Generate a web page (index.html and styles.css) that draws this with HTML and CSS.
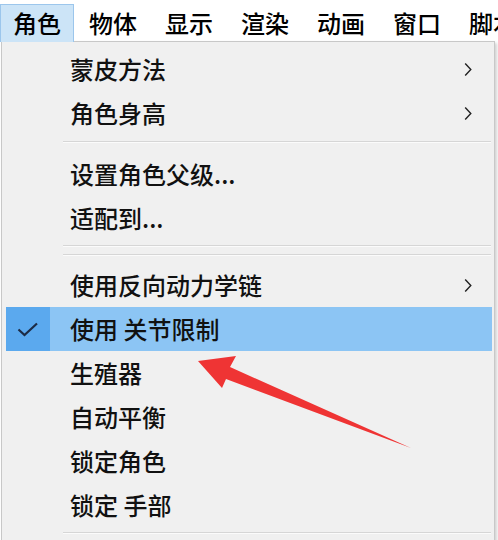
FILE: index.html
```html
<!DOCTYPE html>
<html lang="zh-CN">
<head>
<meta charset="utf-8">
<title>角色菜单</title>
<link rel="stylesheet" href="styles.css">
</head>
<body>
<div class="page">
  <nav class="menubar">
    <span class="top-item active">角色</span>
    <span class="top-item">物体</span>
    <span class="top-item">显示</span>
    <span class="top-item">渲染</span>
    <span class="top-item">动画</span>
    <span class="top-item">窗口</span>
    <span class="top-item">脚本</span>
  </nav>
  <div class="menu">
    <div class="row"><span class="check"></span><span class="label">蒙皮方法</span><span class="sub"><svg width="8" height="15" viewBox="0 0 8 15"><path d="M1.2 1.5 L6.8 7.5 L1.2 13.5" fill="none" stroke="#222" stroke-width="1.4"/></svg></span></div>
    <div class="row"><span class="check"></span><span class="label">角色身高</span><span class="sub"><svg width="8" height="15" viewBox="0 0 8 15"><path d="M1.2 1.5 L6.8 7.5 L1.2 13.5" fill="none" stroke="#222" stroke-width="1.4"/></svg></span></div>
    <div class="sep sep-wide"></div>
    <div class="row"><span class="check"></span><span class="label">设置角色父级...</span></div>
    <div class="row"><span class="check"></span><span class="label">适配到...</span></div>
    <div class="sep"></div>
    <div class="sep"></div>
    <div class="row"><span class="check"></span><span class="label">使用反向动力学链</span><span class="sub"><svg width="8" height="15" viewBox="0 0 8 15"><path d="M1.2 1.5 L6.8 7.5 L1.2 13.5" fill="none" stroke="#222" stroke-width="1.4"/></svg></span></div>
    <div class="row selected"><span class="check"><svg width="22" height="15" viewBox="0 0 22 15"><path d="M1.5 7.5 L7.5 13 L20 1.5" fill="none" stroke="#1c2b45" stroke-width="2.2"/></svg></span><span class="label">使用 关节限制</span></div>
    <div class="row"><span class="check"></span><span class="label">生殖器</span></div>
    <div class="row"><span class="check"></span><span class="label">自动平衡</span></div>
    <div class="row"><span class="check"></span><span class="label">锁定角色</span></div>
    <div class="row"><span class="check"></span><span class="label">锁定 手部</span></div>
    <div class="sep"></div>
    <div class="row"><span class="check"></span><span class="label"></span></div>
  </div>
  <svg class="annotation" width="498" height="540" viewBox="0 0 498 540">
    <polygon points="198,361 236,356 230,367 411,448 226,379 222,388" fill="#ef3434"/>
  </svg>
</div>
</body>
</html>
```
FILE: styles.css
```css
html, body {
  margin: 0;
  padding: 0;
  background: #ffffff;
  overflow: hidden;
}
body {
  font-family: "Noto Sans CJK SC", "Microsoft YaHei", sans-serif;
  font-weight: 500;
  color: #111111;
}
.page {
  position: relative;
  width: 498px;
  height: 540px;
  overflow: hidden;
}
.menubar {
  display: flex;
  height: 41px;
  padding-top: 4px;
  box-sizing: border-box;
  background: #ffffff;
}
.top-item {
  height: 37px;
  line-height: 35px;
  padding: 0 12px;
  margin-right: 2px;
  border: 1px solid transparent;
  border-bottom: none;
  font-size: 24px;
  color: #000;
  white-space: nowrap;
}
.top-item.active {
  background: #cce4f7;
  border-color: #9cc6ec;
}
.menu {
  margin-left: 1px;
  width: 494px;
  box-sizing: border-box;
  border: 1px solid #c8c8c8;
  background: #f0f0f0;
  padding-top: 5px;
  box-shadow: 2px 2px 3px rgba(0, 0, 0, 0.18);
}
.row {
  display: flex;
  align-items: center;
  height: 44px;
  margin: 0 0 0 4px;
  width: 486px;
  font-size: 24px;
}
.check {
  width: 44px;
  height: 100%;
  display: flex;
  align-items: center;
  justify-content: center;
  flex: none;
}
.label {
  flex: 1;
  margin-left: 20px;
  white-space: nowrap;
  line-height: 42px;
}
.sub {
  width: 8px;
  height: 15px;
  margin-right: 20px;
  display: flex;
}
.selected {
  background: #8cc5f4;
}
.selected .check {
  background: #5ba9ee;
}
.sep {
  height: 1px;
  margin: 5px 3px 7px 61px;
  background: #d6d6d6;
  border-bottom: 1px solid #fbfbfb;
}
.sep-wide {
  margin-top: 6px;
  margin-bottom: 9px;
}
.annotation {
  position: absolute;
  left: 0;
  top: 0;
  pointer-events: none;
}
```
